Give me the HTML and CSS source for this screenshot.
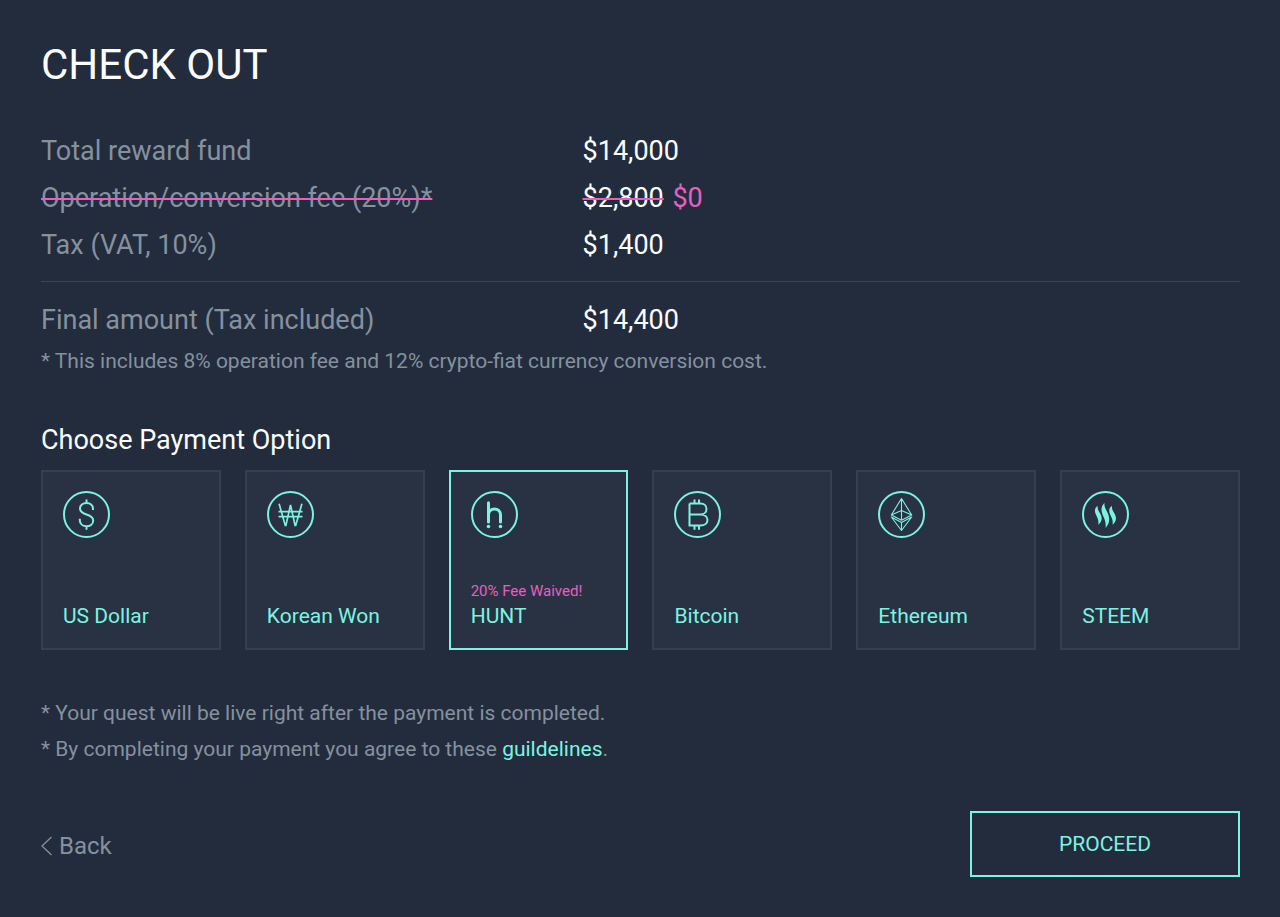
FILE: index.html
```html
<!DOCTYPE html>
<html lang="en">
<head>
<meta charset="utf-8">
<meta name="viewport" content="width=device-width, initial-scale=1">
<title>Check out</title>
<link rel="stylesheet" href="styles.css">
</head>
<body>
<main class="checkout">
  <h1 class="title">CHECK OUT</h1>

  <table class="summary">
    <tbody class="summary-items">
      <tr><th scope="row">Total reward fund</th><td>$14,000</td></tr>
      <tr><th scope="row"><s class="struck">Operation/conversion fee (20%)*</s></th><td><s class="struck">$2,800</s> <span class="waived">$0</span></td></tr>
      <tr><th scope="row">Tax (VAT, 10%)</th><td>$1,400</td></tr>
    </tbody>
    <tbody class="summary-total">
      <tr><th scope="row">Final amount (Tax included)</th><td>$14,400</td></tr>
    </tbody>
  </table>
  <p class="note">* This includes 8% operation fee and 12% crypto-fiat currency conversion cost.</p>

  <form class="payment">
    <fieldset class="options">
      <legend class="options-title">Choose Payment Option</legend>
      <div class="options-grid">
        <label class="option">
          <input class="option-input" type="radio" name="payment" value="usd">
          <svg class="option-icon" viewBox="0.5 -0.5 48 48" aria-hidden="true">
            <circle cx="24" cy="24" r="22.5"/>
            <path d="M30.500 19.400v-1.200c0-3.400-2.800-5.700-6.500-5.700s-6.500 2.400-6.500 5.500c0 3.400 2.400 4.700 6.500 6s6.700 2.700 6.700 6.100c0 3.300-2.900 5.700-6.700 5.700s-6.700-2.500-6.700-6v-1.500M24 9v3.500M24 36v3.300"/>
          </svg>
          <span class="option-name">US Dollar</span>
        </label>
        <label class="option">
          <input class="option-input" type="radio" name="payment" value="krw">
          <svg class="option-icon" viewBox="0.5 -0.5 48 48" aria-hidden="true">
            <circle cx="24" cy="24" r="22.5"/>
            <path class="medium" d="M12.600 13.300L18.800 35h.6L24 14.500L28.600 35h.6L35.400 13.300M12 21.100h24M12 26.200h24"/>
          </svg>
          <span class="option-name">Korean Won</span>
        </label>
        <label class="option">
          <input class="option-input" type="radio" name="payment" value="hunt" checked>
          <svg class="option-icon" viewBox="0.5 -0.5 48 48" aria-hidden="true">
            <circle cx="24" cy="24" r="22.5"/>
            <path class="thick" d="M18 12.300v19.200M18 24.500c0-3.500 2.600-6 6-6s6 2.500 6 6v7"/>
            <circle class="solid" cx="18" cy="36" r="1.800"/>
            <circle class="solid" cx="30" cy="36" r="1.800"/>
          </svg>
          <span class="option-offer">20% Fee Waived!</span>
          <span class="option-name">HUNT</span>
        </label>
        <label class="option">
          <input class="option-input" type="radio" name="payment" value="btc">
          <svg class="option-icon" viewBox="0.5 -0.5 48 48" aria-hidden="true">
            <circle cx="24" cy="24" r="22.5"/>
            <path d="M16 13h11c3.500 0 6 2.300 6 5.400S30.500 24 27 24H16M27 24c4 0 7 2.200 7 5.500S31 35 27 35H16V13M21 9v4M25.500 9v4M21 35v4.200M25.500 35v4.200"/>
          </svg>
          <span class="option-name">Bitcoin</span>
        </label>
        <label class="option">
          <input class="option-input" type="radio" name="payment" value="eth">
          <svg class="option-icon" viewBox="0.5 -0.5 48 48" aria-hidden="true">
            <circle cx="24" cy="24" r="22.5"/>
            <path class="thin" d="M24 8L13.800 24.500L24 29.800L34.200 24.500ZM13.800 24.500L24 20l10.200 4.500M24 8v21.800M13.800 26.500L24 40l10.200-13.500L24 32ZM24 32v8"/>
          </svg>
          <span class="option-name">Ethereum</span>
        </label>
        <label class="option">
          <input class="option-input" type="radio" name="payment" value="steem">
          <svg class="option-icon" viewBox="0.5 -0.5 48 48" aria-hidden="true">
            <circle cx="24" cy="24" r="22.5"/>
            <path class="solid" d="M16.200 15.300c-.5 2.800.7 4.500 2.200 7.200c2.500 4.300 2.700 8-1.700 11.800c.6-3.900-.2-5.800-1.600-8.800c-2.200-4.500-2.600-7.200 1.100-10.200Z"/>
            <path class="solid" d="M23 12.200c-.5 3.700 1 6 2.800 9.500c2.800 5.500 2.700 10.600-1.700 15.800c.4-5-.5-7.700-2.200-11.400c-2.600-5.600-2.800-9.800 1.100-13.900Z"/>
            <path class="solid" d="M30.500 15.300c-.5 2.800.7 4.500 2.200 7.200c2.500 4.300 2.700 8-1.700 11.800c.6-3.900-.2-5.800-1.600-8.800c-2.200-4.500-2.600-7.200 1.100-10.200Z"/>
          </svg>
          <span class="option-name">STEEM</span>
        </label>
      </div>
    </fieldset>

    <div class="terms">
      <p class="terms-line">* Your quest will be live right after the payment is completed.</p>
      <p class="terms-line">* By completing your payment you agree to these <a class="terms-link" href="#guidelines">guildelines</a>.</p>
    </div>

    <div class="actions">
      <a class="back" href="#back">
        <svg class="back-icon" viewBox="0 0 12 20" aria-hidden="true"><path d="M10.500 1L1 10L10.500 19"/></svg>
        Back
      </a>
      <button class="proceed" type="submit">PROCEED</button>
    </div>
  </form>
</main>
</body>
</html>
```
FILE: styles.css
```css
:root {
  --bg: #222c3d;
  --card: #283243;
  --line: #343f50;
  --muted: #85919d;
  --mint: #7cf3e1;
  --pink: #e85fc0;
  --white: #fbfdff;
}

*,
*::before,
*::after {
  box-sizing: border-box;
}

body {
  margin: 0;
  background: var(--bg);
  color: var(--white);
  font-family: Roboto, "Liberation Sans", sans-serif;
}

.checkout {
  padding: 40px 40px 40px 41px;
}

.title {
  margin: 0 0 38px;
  font-size: 42px;
  line-height: 50px;
  font-weight: 400;
}

.summary {
  width: 100%;
  border-collapse: collapse;
  table-layout: fixed;
  font-size: 27px;
  line-height: 47px;
}

.summary th,
.summary td {
  padding: 0;
  text-align: left;
  font-weight: 400;
}

.summary th {
  width: 45%;
  color: var(--muted);
}

.summary td {
  padding-left: 2px;
}

.summary-items tr:last-child > * {
  padding-bottom: 12px;
}

.summary-total {
  border-top: 1px solid #39445a;
}

.summary-total tr > * {
  padding-top: 15px;
}

.struck {
  text-decoration: line-through 2px var(--pink);
}

.waived {
  margin-left: 2px;
  color: var(--pink);
}

.note {
  margin: 3px 0 0;
  color: var(--muted);
  font-size: 21px;
  line-height: 28px;
}

.options {
  min-width: 0;
  margin: 49px 0 0;
  padding: 0;
  border: 0;
}

.options-title {
  padding: 0;
  font-size: 27px;
  line-height: 32px;
}

.options-grid {
  display: grid;
  grid-template-columns: repeat(6, 1fr);
  gap: 24px;
  margin-top: 14px;
}

.option {
  position: relative;
  display: flex;
  flex-direction: column;
  min-height: 180px;
  padding: 18px 20px;
  border: 2px solid var(--line);
  background: var(--card);
  color: var(--mint);
  cursor: pointer;
}

.option:has(.option-input:checked) {
  border-color: var(--mint);
}

.option-input {
  position: absolute;
  inset: 0;
  width: 100%;
  height: 100%;
  margin: 0;
  opacity: 0;
  cursor: pointer;
}

.option-icon {
  width: 48px;
  height: 48px;
  margin-bottom: auto;
  fill: none;
  stroke: currentColor;
  stroke-width: 2;
}

.option-icon .thick {
  stroke-width: 3;
  stroke-linecap: round;
}

.option-icon .medium {
  stroke-width: 1.7;
}

.option-icon .thin {
  stroke-width: 1.1;
  stroke-linejoin: round;
}

.option-icon .solid {
  fill: currentColor;
  stroke: none;
}

.option-offer {
  color: var(--pink);
  font-size: 15px;
  line-height: 22px;
}

.option-name {
  font-size: 21px;
  line-height: 28px;
}

.terms {
  margin-top: 45px;
  color: var(--muted);
  font-size: 21px;
  line-height: 36px;
}

.terms-line {
  margin: 0;
}

.terms-link {
  color: var(--mint);
  text-decoration: none;
}

.actions {
  display: flex;
  align-items: center;
  justify-content: space-between;
  margin-top: 44px;
}

.back {
  display: flex;
  align-items: center;
  gap: 6px;
  padding-top: 3px;
  color: var(--muted);
  font-size: 24px;
  line-height: 32px;
  text-decoration: none;
}

.back-icon {
  width: 12px;
  height: 20px;
  fill: none;
  stroke: currentColor;
  stroke-width: 1.3;
}

.proceed {
  width: 270px;
  padding: 17px 24px;
  border: 2px solid var(--mint);
  background: transparent;
  color: var(--mint);
  font: inherit;
  font-size: 21px;
  line-height: 28px;
  cursor: pointer;
}
```
